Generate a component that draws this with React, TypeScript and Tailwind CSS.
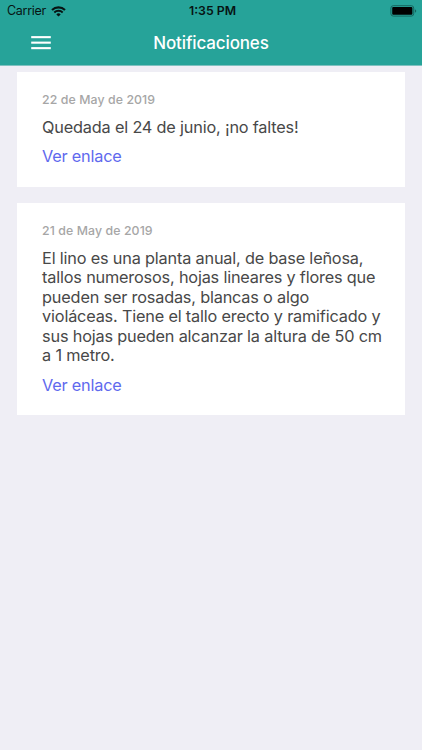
type Notification = {
  id: number;
  date: string;
  lines: string[];
};

const notifications: Notification[] = [
  {
    id: 1,
    date: "22 de May de 2019",
    lines: ["Quedada el 24 de junio, ¡no faltes!"],
  },
  {
    id: 2,
    date: "21 de May de 2019",
    lines: [
      "El lino es una planta anual, de base leñosa,",
      "tallos numerosos, hojas lineares y flores que",
      "pueden ser rosadas, blancas o algo",
      "violáceas. Tiene el tallo erecto y ramificado y",
      "sus hojas pueden alcanzar la altura de 50 cm",
      "a 1 metro.",
    ],
  },
];

const WifiIcon = () => (
  <svg width="15" height="11" viewBox="0 0 15 11" fill="none" stroke="#071413">
    <path d="M1 4.1a9.2 9.2 0 0 1 13 0" strokeWidth="2.1" />
    <path d="M3.3 6.5a6 6 0 0 1 8.4 0" strokeWidth="1.9" />
    <path d="M7.5 10.5 5.3 8.4a3.1 3.1 0 0 1 4.4 0z" fill="#071413" stroke="none" />
  </svg>
);

const BatteryIcon = () => (
  <svg width="27" height="12" viewBox="0 0 27 12">
    <rect x="0.9" y="0.7" width="22.8" height="10.4" rx="2.4" fill="none" stroke="#15655e" />
    <rect x="2.2" y="2" width="20.2" height="7.8" rx="1" fill="#000" />
    <path d="M24.9 4.2c1.8.5 1.8 3 0 3.5z" fill="#15655e" />
  </svg>
);

const StatusBar = () => (
  <div className="grid h-[22px] grid-cols-3 items-center text-[#071413]">
    <div className="flex items-center gap-[5px] pl-[7px]">
      <span className="text-[12.5px] tracking-[-0.3px]">Carrier</span>
      <WifiIcon />
    </div>
    <span className="pl-[3px] text-center text-[12.3px] font-semibold">1:35 PM</span>
    <div className="flex justify-end pr-[5px]">
      <BatteryIcon />
    </div>
  </div>
);

const Header = () => (
  <header className="h-[66px] border-b border-[#7fc1c0] bg-[#26a399]">
    <StatusBar />
    <div className="grid h-[43px] grid-cols-[62px_1fr_62px] items-center">
      <button className="flex justify-end pr-[11px]" aria-label="Menu">
        <svg width="20" height="15" viewBox="0 0 20 15" fill="#fff">
          <rect x="0.2" y="0.1" width="19.6" height="2.1" />
          <rect x="0.2" y="5.6" width="19.6" height="2.1" />
          <rect x="0.2" y="11.1" width="19.6" height="2.1" />
        </svg>
      </button>
      <h1 className="text-center text-[17px] font-medium tracking-[-0.13px] text-white">Notificaciones</h1>
    </div>
  </header>
);

const NotificationCard = ({ date, lines }: Notification) => (
  <article className="bg-white px-[25.5px] pt-[19px] pb-[20.3px]">
    <time className="block text-[12.3px] leading-[18px] font-medium tracking-[0.1px] text-[#a6a6a6]">{date}</time>
    <p className="mt-[9px] text-[16.3px] leading-[19.45px] tracking-[-0.19px] whitespace-nowrap text-[#484848]">
      {lines.map((line) => (
        <span key={line} className="block">
          {line}
        </span>
      ))}
    </p>
    <a href="#" className="mt-[9.4px] block text-[16.3px] leading-[20px] tracking-[-0.22px] text-[#5f69ee]">
      Ver enlace
    </a>
  </article>
);

const App = () => {
  return (
    <div className="h-[750px] w-[422px] overflow-hidden bg-[#efeef5] font-['Inter','Liberation_Sans',sans-serif]">
      <Header />
      <main className="flex flex-col gap-[16.3px] px-[16.6px] pt-[5.5px]">
        {notifications.map((item) => (
          <NotificationCard key={item.id} {...item} />
        ))}
      </main>
    </div>
  );
};

export default App;
